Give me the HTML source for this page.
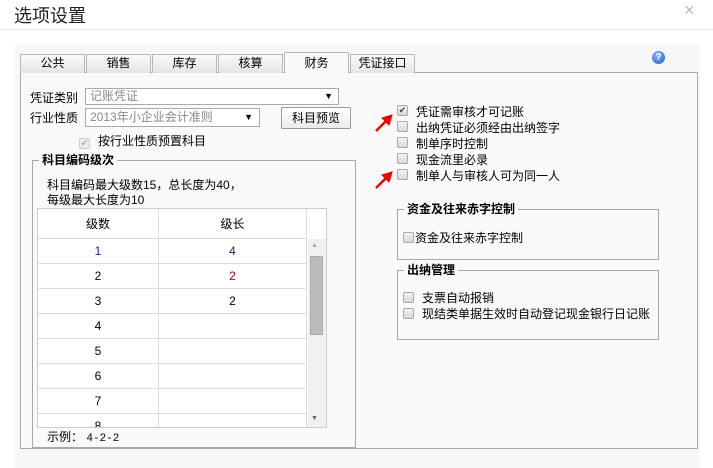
<!DOCTYPE html>
<html><head><meta charset="utf-8"><style>
*{margin:0;padding:0;box-sizing:border-box}
body{width:713px;height:468px;background:#fff;font-family:"Liberation Sans","Noto Sans CJK SC",sans-serif;font-size:12px;color:#000;position:relative;overflow:hidden}
.a{position:absolute;white-space:nowrap}
.cb{position:absolute;width:11px;height:11px;border:1px solid #aaa;border-radius:2px;background:linear-gradient(#f4f4f4,#d8d8d8)}
.tab{position:absolute;top:54px;height:19px;width:65px;border:1px solid #b8b8b8;border-bottom:none;background:linear-gradient(#fafafa,#e4e4e4);text-align:center;line-height:17px;font-size:12px}
.grp{position:absolute;border:1px solid #a8a8a8}
.gt{position:absolute;top:-9px;left:6px;background:#f9f9f9;padding:0 3px;font-weight:bold;font-size:12px;line-height:16px}
td{border:1px solid #dcdcdc;text-align:center;height:25px;font-size:12px}
</style></head><body>
<div class="a" style="left:14px;top:2px;font-size:18px;color:#222">选项设置</div>
<div class="a" style="left:684px;top:0px;font-size:18px;color:#bbb">×</div>
<div class="a" style="left:0;top:29px;width:713px;height:1px;background:#e2e2e2"></div>
<div class="a" style="left:15px;top:45px;width:685px;height:423px;background:#f7f7f7"></div>
<div class="a" style="left:20px;top:72px;width:678px;height:377px;border:1px solid #aaa;background:#f9f9f9"></div>
<div class="tab" style="left:20px">公共</div>
<div class="tab" style="left:86px">销售</div>
<div class="tab" style="left:152px">库存</div>
<div class="tab" style="left:218px">核算</div>
<div class="tab" style="left:284px;top:52px;height:21px;background:#f9f9f9;line-height:20px">财务</div>
<div class="tab" style="left:350px">凭证接口</div>
<div class="a" style="left:652px;top:51px;width:13px;height:13px;border-radius:50%;background:radial-gradient(circle at 40% 35%,#8ab8ff,#1a56c8);color:#fff;font-size:10px;font-weight:bold;text-align:center;line-height:13px">?</div>

<div class="a" style="left:30px;top:89px">凭证类别</div>
<div class="a" style="left:85px;top:88px;width:254px;height:17px;border:1px solid #aaa;background:#fff;color:#888;padding-left:4px;line-height:15px">记账凭证<span style="position:absolute;right:5px;color:#000;font-size:9px">▼</span></div>
<div class="a" style="left:30px;top:109px">行业性质</div>
<div class="a" style="left:85px;top:108px;width:175px;height:19px;border:1px solid #aaa;background:#fff;color:#888;padding-left:4px;line-height:17px">2013年小企业会计准则<span style="position:absolute;right:6px;color:#000;font-size:9px">▼</span></div>
<div class="a" style="left:281px;top:107px;width:70px;height:22px;border:1px solid #999;border-radius:2px;background:linear-gradient(#fff,#ececec);text-align:center;line-height:20px">科目预览</div>
<div class="cb" style="left:79px;top:138px;border-color:#ccc;background:#eee;color:#aaa;font-size:9px;line-height:9px;text-align:center">✔</div>
<div class="a" style="left:98px;top:132px">按行业性质预置科目</div>

<div class="grp" style="left:32px;top:160px;width:324px;height:288px"><div class="gt">科目编码级次</div></div>
<div class="a" style="left:47px;top:178px;line-height:15px">科目编码最大级数15，总长度为40，<br>每级最大长度为10</div>
<div class="a" style="left:37px;top:208px;width:290px;height:220px;border:1px solid #ccc;background:#fff;overflow:hidden">
<table style="border-collapse:collapse;width:270px;position:absolute;left:-1px;top:-1px">
<tr><td style="height:30px;width:121px">级数</td><td style="height:30px">级长</td></tr>
<tr><td style="color:#33108a">1</td><td style="color:#33108a">4</td></tr>
<tr><td>2</td><td style="color:#a00030">2</td></tr>
<tr><td>3</td><td>2</td></tr>
<tr><td>4</td><td></td></tr><tr><td>5</td><td></td></tr><tr><td>6</td><td></td></tr><tr><td>7</td><td></td></tr><tr><td>8</td><td></td></tr>
</table>
<div class="a" style="left:270px;top:30px;width:19px;height:190px;background:#f0f0f0"><div class="a" style="left:3px;top:3px;color:#aaa;font-size:7px">▲</div><div class="a" style="left:2px;top:17px;width:13px;height:79px;background:#bcbcbc;border:1px solid #aaa"></div><div class="a" style="left:3px;top:176px;color:#666;font-size:7px">▼</div></div>
</div>
<div class="a" style="left:47px;top:428px">示例： <span style="font-family:'Liberation Mono',monospace;font-size:11px">4-2-2</span></div>

<div class="cb" style="left:397px;top:105px;font-size:9px;line-height:9px;text-align:center;color:#444">✔</div>
<div class="a" style="left:416px;top:103px">凭证需审核才可记账</div>
<div class="cb" style="left:397px;top:121px"></div><div class="a" style="left:416px;top:119px">出纳凭证必须经由出纳签字</div>
<div class="cb" style="left:397px;top:137px"></div><div class="a" style="left:416px;top:135px">制单序时控制</div>
<div class="cb" style="left:397px;top:153px"></div><div class="a" style="left:416px;top:151px">现金流里必录</div>
<div class="cb" style="left:397px;top:169px"></div><div class="a" style="left:416px;top:167px">制单人与审核人可为同一人</div>
<svg class="a" style="left:372px;top:112px" width="24" height="80"><g fill="#e00" stroke="#e00" stroke-width="2.5"><line x1="4" y1="19" x2="14" y2="9"/><polygon points="20,3 10,6 17,13" stroke-width="1"/><line x1="4" y1="76" x2="14" y2="66"/><polygon points="20,60 10,63 17,70" stroke-width="1"/></g></svg>

<div class="grp" style="left:397px;top:209px;width:262px;height:51px"><div class="gt">资金及往来赤字控制</div></div>
<div class="cb" style="left:403px;top:232px"></div><div class="a" style="left:415px;top:229px">资金及往来赤字控制</div>
<div class="grp" style="left:397px;top:270px;width:262px;height:70px"><div class="gt">出纳管理</div></div>
<div class="cb" style="left:403px;top:292px"></div><div class="a" style="left:422px;top:289px">支票自动报销</div>
<div class="cb" style="left:403px;top:308px"></div><div class="a" style="left:422px;top:305px">现结类单据生效时自动登记现金银行日记账</div>
</body></html>
